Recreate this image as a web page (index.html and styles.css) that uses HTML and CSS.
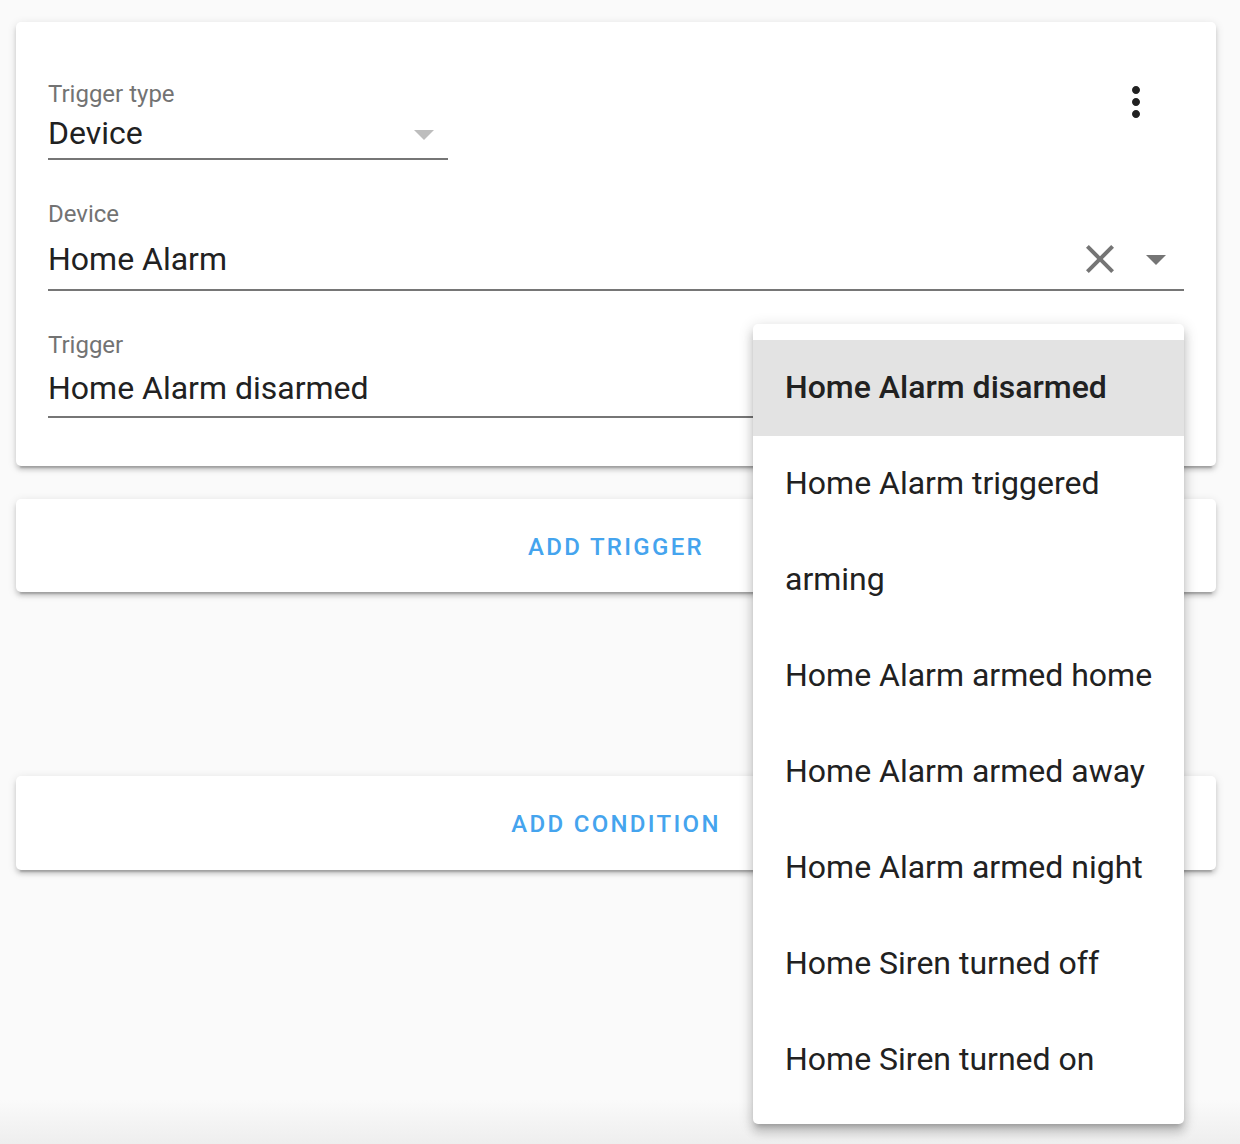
FILE: index.html
```html
<!DOCTYPE html>
<html lang="en">
<head>
  <meta charset="UTF-8" />
  <meta name="viewport" content="width=device-width, initial-scale=1.0" />
  <title>Automation editor</title>
  <link rel="stylesheet" href="styles.css">
</head>
<body>
  <div class="page">
    <div class="card trigger-card">
      <div class="card-head">
        <div class="field field-type">
          <div class="field-label">Trigger type</div>
          <div class="field-input">
            <span class="field-value">Device</span>
            <svg class="icon icon-drop muted" viewBox="0 0 24 24"><path d="M7 10l5 5 5-5z"/></svg>
          </div>
        </div>
        <button type="button" class="icon-button menu-button" aria-label="More">
          <svg class="icon" viewBox="0 0 24 24"><path d="M12 8c1.1 0 2-.9 2-2s-.9-2-2-2-2 .9-2 2 .9 2 2 2zm0 2c-1.1 0-2 .9-2 2s.9 2 2 2 2-.9 2-2-.9-2-2-2zm0 6c-1.1 0-2 .9-2 2s.9 2 2 2 2-.9 2-2-.9-2-2-2z"/></svg>
        </button>
      </div>

      <div class="field field-device">
        <div class="field-label">Device</div>
        <div class="field-input">
          <span class="field-value">Home Alarm</span>
          <svg class="icon icon-clear" viewBox="0 0 24 24"><path d="M19 6.41L17.590 5 12 10.59 6.41 5 5 6.41 10.59 12 5 17.59 6.41 19 12 13.41 17.59 19 19 17.59 13.41 12z"/></svg>
          <svg class="icon icon-drop" viewBox="0 0 24 24"><path d="M7 10l5 5 5-5z"/></svg>
        </div>
      </div>

      <div class="field field-trigger">
        <div class="field-label">Trigger</div>
        <div class="field-input">
          <span class="field-value">Home Alarm disarmed</span>
        </div>
      </div>
    </div>

    <div class="card action-card">
      <button type="button" class="text-button">ADD TRIGGER</button>
    </div>

    <div class="card action-card condition-card">
      <button type="button" class="text-button">ADD CONDITION</button>
    </div>

    <ul class="listbox">
      <li class="listbox-item selected">Home Alarm disarmed</li>
      <li class="listbox-item">Home Alarm triggered</li>
      <li class="listbox-item">arming</li>
      <li class="listbox-item">Home Alarm armed home</li>
      <li class="listbox-item">Home Alarm armed away</li>
      <li class="listbox-item">Home Alarm armed night</li>
      <li class="listbox-item">Home Siren turned off</li>
      <li class="listbox-item">Home Siren turned on</li>
    </ul>
  </div>
</body>
</html>
```

FILE: styles.css
```css
html {
  background-color: #fafafa;
}

body {
  margin: 0;
  min-height: 100vh;
  font-family: Roboto, 'Liberation Sans', Arial, sans-serif;
  color: #212121;
  background: linear-gradient(to bottom, #fafafa 1100px, #eeeeee 1144px);
}

.page {
  position: relative;
  width: 1200px;
  padding: 22px 0 0 16px;
}

.card {
  background-color: #ffffff;
  border-radius: 5px;
  box-shadow: 0 4px 4px 0 rgba(0, 0, 0, 0.14),
              0 2px 10px 0 rgba(0, 0, 0, 0.12),
              0 6px 2px -4px rgba(0, 0, 0, 0.2);
}

.trigger-card {
  padding: 32px 32px 48px;
}

.card-head {
  display: flex;
  justify-content: space-between;
  align-items: flex-start;
}

.field-label {
  height: 30px;
  line-height: 30px;
  font-size: 24px;
  color: #737373;
}

.field-input {
  display: flex;
  align-items: center;
  height: 40px;
  border-bottom: 2px solid #767676;
}

.field-value {
  flex: 1;
  font-size: 32px;
  line-height: 40px;
  color: #212121;
  white-space: nowrap;
}

.field-type {
  width: 400px;
  margin-top: 25px;
}

.field-type .field-input {
  margin-top: 4px;
  padding-bottom: 5px;
}

.field-device {
  margin-top: 39px;
}

.field-device .field-input {
  margin-top: 10px;
  padding-bottom: 10px;
}

.field-trigger {
  margin-top: 39px;
}

.field-trigger .field-input {
  margin-top: 8px;
  padding-bottom: 8px;
}

.icon {
  width: 48px;
  height: 48px;
  flex-shrink: 0;
  fill: #757575;
}

.icon.muted {
  fill: #bdbdbd;
}

.field-type .icon-drop {
  margin-top: 2px;
}

.icon-clear {
  margin-right: 8px;
}

.field-device .icon-drop {
  margin-right: 4px;
}

.icon-button {
  display: flex;
  align-items: center;
  justify-content: center;
  width: 96px;
  height: 96px;
  padding: 0;
  border: none;
  border-radius: 50%;
  background: none;
  cursor: pointer;
}

.menu-button .icon {
  fill: #212121;
}

.action-card {
  display: flex;
  align-items: center;
  justify-content: center;
  height: 93px;
  margin-top: 33px;
}

.condition-card {
  height: 94px;
  margin-top: 184px;
}

.text-button {
  padding: 2px 16px 0;
  border: none;
  background: none;
  font-family: Roboto, 'Liberation Sans', Arial, sans-serif;
  font-size: 24px;
  font-weight: 500;
  letter-spacing: 2.3px;
  color: #45a4ee;
  cursor: pointer;
}

/* open dropdown of the trigger field */
.listbox {
  position: absolute;
  top: 324px;
  left: 753px;
  width: 431px;
  margin: 0;
  padding: 16px 0;
  list-style: none;
  background-color: #ffffff;
  border-radius: 5px;
  box-shadow: 0 8px 10px 1px rgba(0, 0, 0, 0.14),
              0 3px 14px 2px rgba(0, 0, 0, 0.12),
              0 5px 5px -3px rgba(0, 0, 0, 0.2);
}

.listbox-item {
  display: flex;
  align-items: center;
  height: 96px;
  padding: 0 0 2px 32px;
  box-sizing: border-box;
  font-size: 32px;
  color: #212121;
  white-space: nowrap;
}

.listbox-item.selected {
  background-color: #e3e3e3;
  font-weight: 500;
}
```
